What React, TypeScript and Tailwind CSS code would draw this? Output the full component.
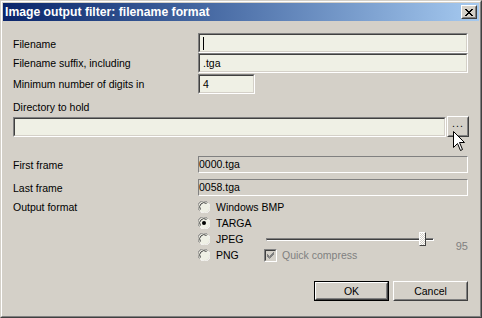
import React from "react";

function Sunken({ className = "", children }: { className?: string; children?: React.ReactNode }) {
  return (
    <div className={`border border-t-[#808080] border-l-[#808080] border-b-white border-r-white ${className}`}>
      <div className="h-full w-full border border-t-[#404040] border-l-[#404040] border-b-[#d4d0c8] border-r-[#d4d0c8] bg-[#eff0e5] flex items-center pl-[3px]">
        {children}
      </div>
    </div>
  );
}

function Raised({ className = "", children }: { className?: string; children?: React.ReactNode }) {
  return (
    <div className={`border border-t-white border-l-white border-b-[#404040] border-r-[#404040] ${className}`}>
      <div className="h-full w-full border border-t-[#d4d0c8] border-l-[#d4d0c8] border-b-[#808080] border-r-[#808080] bg-[#d4d0c8] flex items-center justify-center">
        {children}
      </div>
    </div>
  );
}

function ReadOnly({ text }: { text: string }) {
  return (
    <div className="w-[270px] h-[17px] border border-t-[#808080] border-l-[#808080] border-b-white border-r-white flex items-center">
      {text}
    </div>
  );
}

function Radio({ checked = false }: { checked?: boolean }) {
  return (
    <svg width="12" height="12" viewBox="0 0 12 12" className="shrink-0">
      <circle cx="6" cy="6" r="5.5" fill="#eff0e5" />
      <path d="M1.5 9.5 A5.5 5.5 0 0 1 9.5 1.5" stroke="#808080" strokeWidth="1" fill="none" />
      <path d="M2.5 8.5 A4.3 4.3 0 0 1 8.5 2.5" stroke="#404040" strokeWidth="1" fill="none" />
      <path d="M10.5 2.5 A5.5 5.5 0 0 1 2.5 10.5" stroke="#ffffff" strokeWidth="1" fill="none" />
      {checked && <circle cx="6" cy="6" r="2" fill="#000" />}
    </svg>
  );
}

export default function App() {
  return (
    <div className="relative w-[482px] h-[318px] bg-[#d4d0c8] border border-t-[#d4d0c8] border-l-[#d4d0c8] border-b-[#404040] border-r-[#404040] font-['Liberation_Sans',Arial,sans-serif] text-[10.5px] text-black leading-none">
      <div className="h-full w-full border border-t-white border-l-white border-b-[#808080] border-r-[#808080] p-[1px] flex flex-col">
        {/* Title bar */}
        <div className="h-[18px] bg-gradient-to-r from-[#0a246a] to-[#a6caf0] flex items-center pl-[2px] pr-[2px] shrink-0">
          <span className="text-white font-bold text-[12.2px]">Image output filter: filename format</span>
          <Raised className="ml-auto w-[16px] h-[14px]">
            <svg width="8" height="7" viewBox="0 0 8 7" shapeRendering="crispEdges">
              <path d="M0 0h2v1h-2z M6 0h2v1h-2z M1 1h2v1h-2z M5 1h2v1h-2z M2 2h4v1h-4z M3 3h2v1h-2z M2 4h4v1h-4z M1 5h2v1h-2z M5 5h2v1h-2z M0 6h2v1h-2z M6 6h2v1h-2z" fill="#000" />
            </svg>
          </Raised>
        </div>

        {/* Body */}
        <div className="flex flex-col pl-[10px]">
          <div className="mt-[12px] flex items-center h-[20px]">
            <div className="w-[185px] pt-[3px]">Filename</div>
            <Sunken className="w-[270px] h-[20px]">
              <div className="w-[1px] h-[13px] bg-black" />
            </Sunken>
          </div>
          <div className="flex items-center h-[20px]">
            <div className="w-[185px] pt-[1px]">Filename suffix, including</div>
            <Sunken className="w-[270px] h-[20px]">.tga</Sunken>
          </div>
          <div className="mt-[1px] flex items-center h-[20px]">
            <div className="w-[185px]">Minimum number of digits in</div>
            <Sunken className="w-[57px] h-[20px]">4</Sunken>
          </div>

          <div className="mt-[7px] h-[13px] flex items-center">Directory to hold</div>
          <div className="mt-[2px] flex items-center gap-[1px]">
            <Sunken className="w-[433px] h-[20px]" />
            <Raised className="w-[22px] h-[21px]">
              <span className="-mt-[6px] tracking-[1px]">...</span>
            </Raised>
          </div>

          <div className="mt-[19px] flex items-center h-[17px]">
            <div className="w-[185px] pt-[1px]">First frame</div>
            <ReadOnly text="0000.tga" />
          </div>
          <div className="mt-[6px] flex items-center h-[17px]">
            <div className="w-[185px] pt-[2px]">Last frame</div>
            <ReadOnly text="0058.tga" />
          </div>

          <div className="mt-[3px] flex">
            <div className="w-[185px] h-[16px] flex items-center pt-[1px]">Output format</div>
            <div className="flex flex-col w-[270px]">
              <div className="h-[16px] flex items-center">
                <Radio />
                <span className="ml-[6px]">Windows BMP</span>
              </div>
              <div className="h-[16px] flex items-center">
                <Radio checked />
                <span className="ml-[6px]">TARGA</span>
              </div>
              <div className="h-[16px] flex items-center">
                <div className="w-[66px] flex items-center">
                  <Radio />
                  <span className="ml-[6px]">JPEG</span>
                </div>
                <div className="relative ml-[2px] w-[168px] h-[16px] flex items-center">
                  <div className="w-full h-[3px] border border-t-[#808080] border-l-[#808080] border-b-white border-r-white bg-[#404040]" />
                  <div className="absolute left-[153px] top-[1px] w-[7px] h-[14px] border border-t-white border-l-white border-b-[#404040] border-r-[#404040] bg-[repeating-conic-gradient(#ffffff_0_25%,#d4d0c8_0_50%)] bg-[length:2px_2px]" />
                </div>
                <span className="ml-auto translate-y-[7px] text-[#808080] text-[11px]">95</span>
              </div>
              <div className="h-[16px] flex items-center">
                <div className="w-[66px] flex items-center">
                  <Radio />
                  <span className="ml-[6px]">PNG</span>
                </div>
                <div className="w-[13px] h-[13px] border border-t-[#808080] border-l-[#808080] border-b-white border-r-white">
                  <div className="w-full h-full border border-t-[#404040] border-l-[#404040] border-b-[#d4d0c8] border-r-[#d4d0c8] bg-[#d4d0c8] flex items-center justify-center">
                    <svg width="7" height="7" viewBox="0 0 7 7">
                      <path d="M0 2 L2.5 4.5 L7 0 M0 3 L2.5 5.5 L7 1 M0 4 L2.5 6.5 L7 2" stroke="#808080" strokeWidth="1" fill="none" />
                    </svg>
                  </div>
                </div>
                <span className="ml-[5px] text-[#808080]">Quick compress</span>
              </div>
            </div>
          </div>

          <div className="mt-[18px] flex justify-end gap-[4px] pr-[11px]">
            <div className="w-[75px] h-[20px] border border-black">
              <Raised className="w-full h-full">OK</Raised>
            </div>
            <Raised className="w-[75px] h-[20px]">Cancel</Raised>
          </div>
        </div>
      </div>

      {/* Mouse cursor */}
      <svg className="absolute left-[452px] top-[130px]" width="13" height="21" viewBox="0 0 13 21">
        <path d="M0.5 0.5 L0.5 16.5 L4.5 12.5 L7.5 19.5 L9.5 18.5 L6.5 11.5 L11.5 11.5 Z" fill="#fff" stroke="#000" strokeWidth="1" strokeLinejoin="miter" />
      </svg>
    </div>
  );
}
